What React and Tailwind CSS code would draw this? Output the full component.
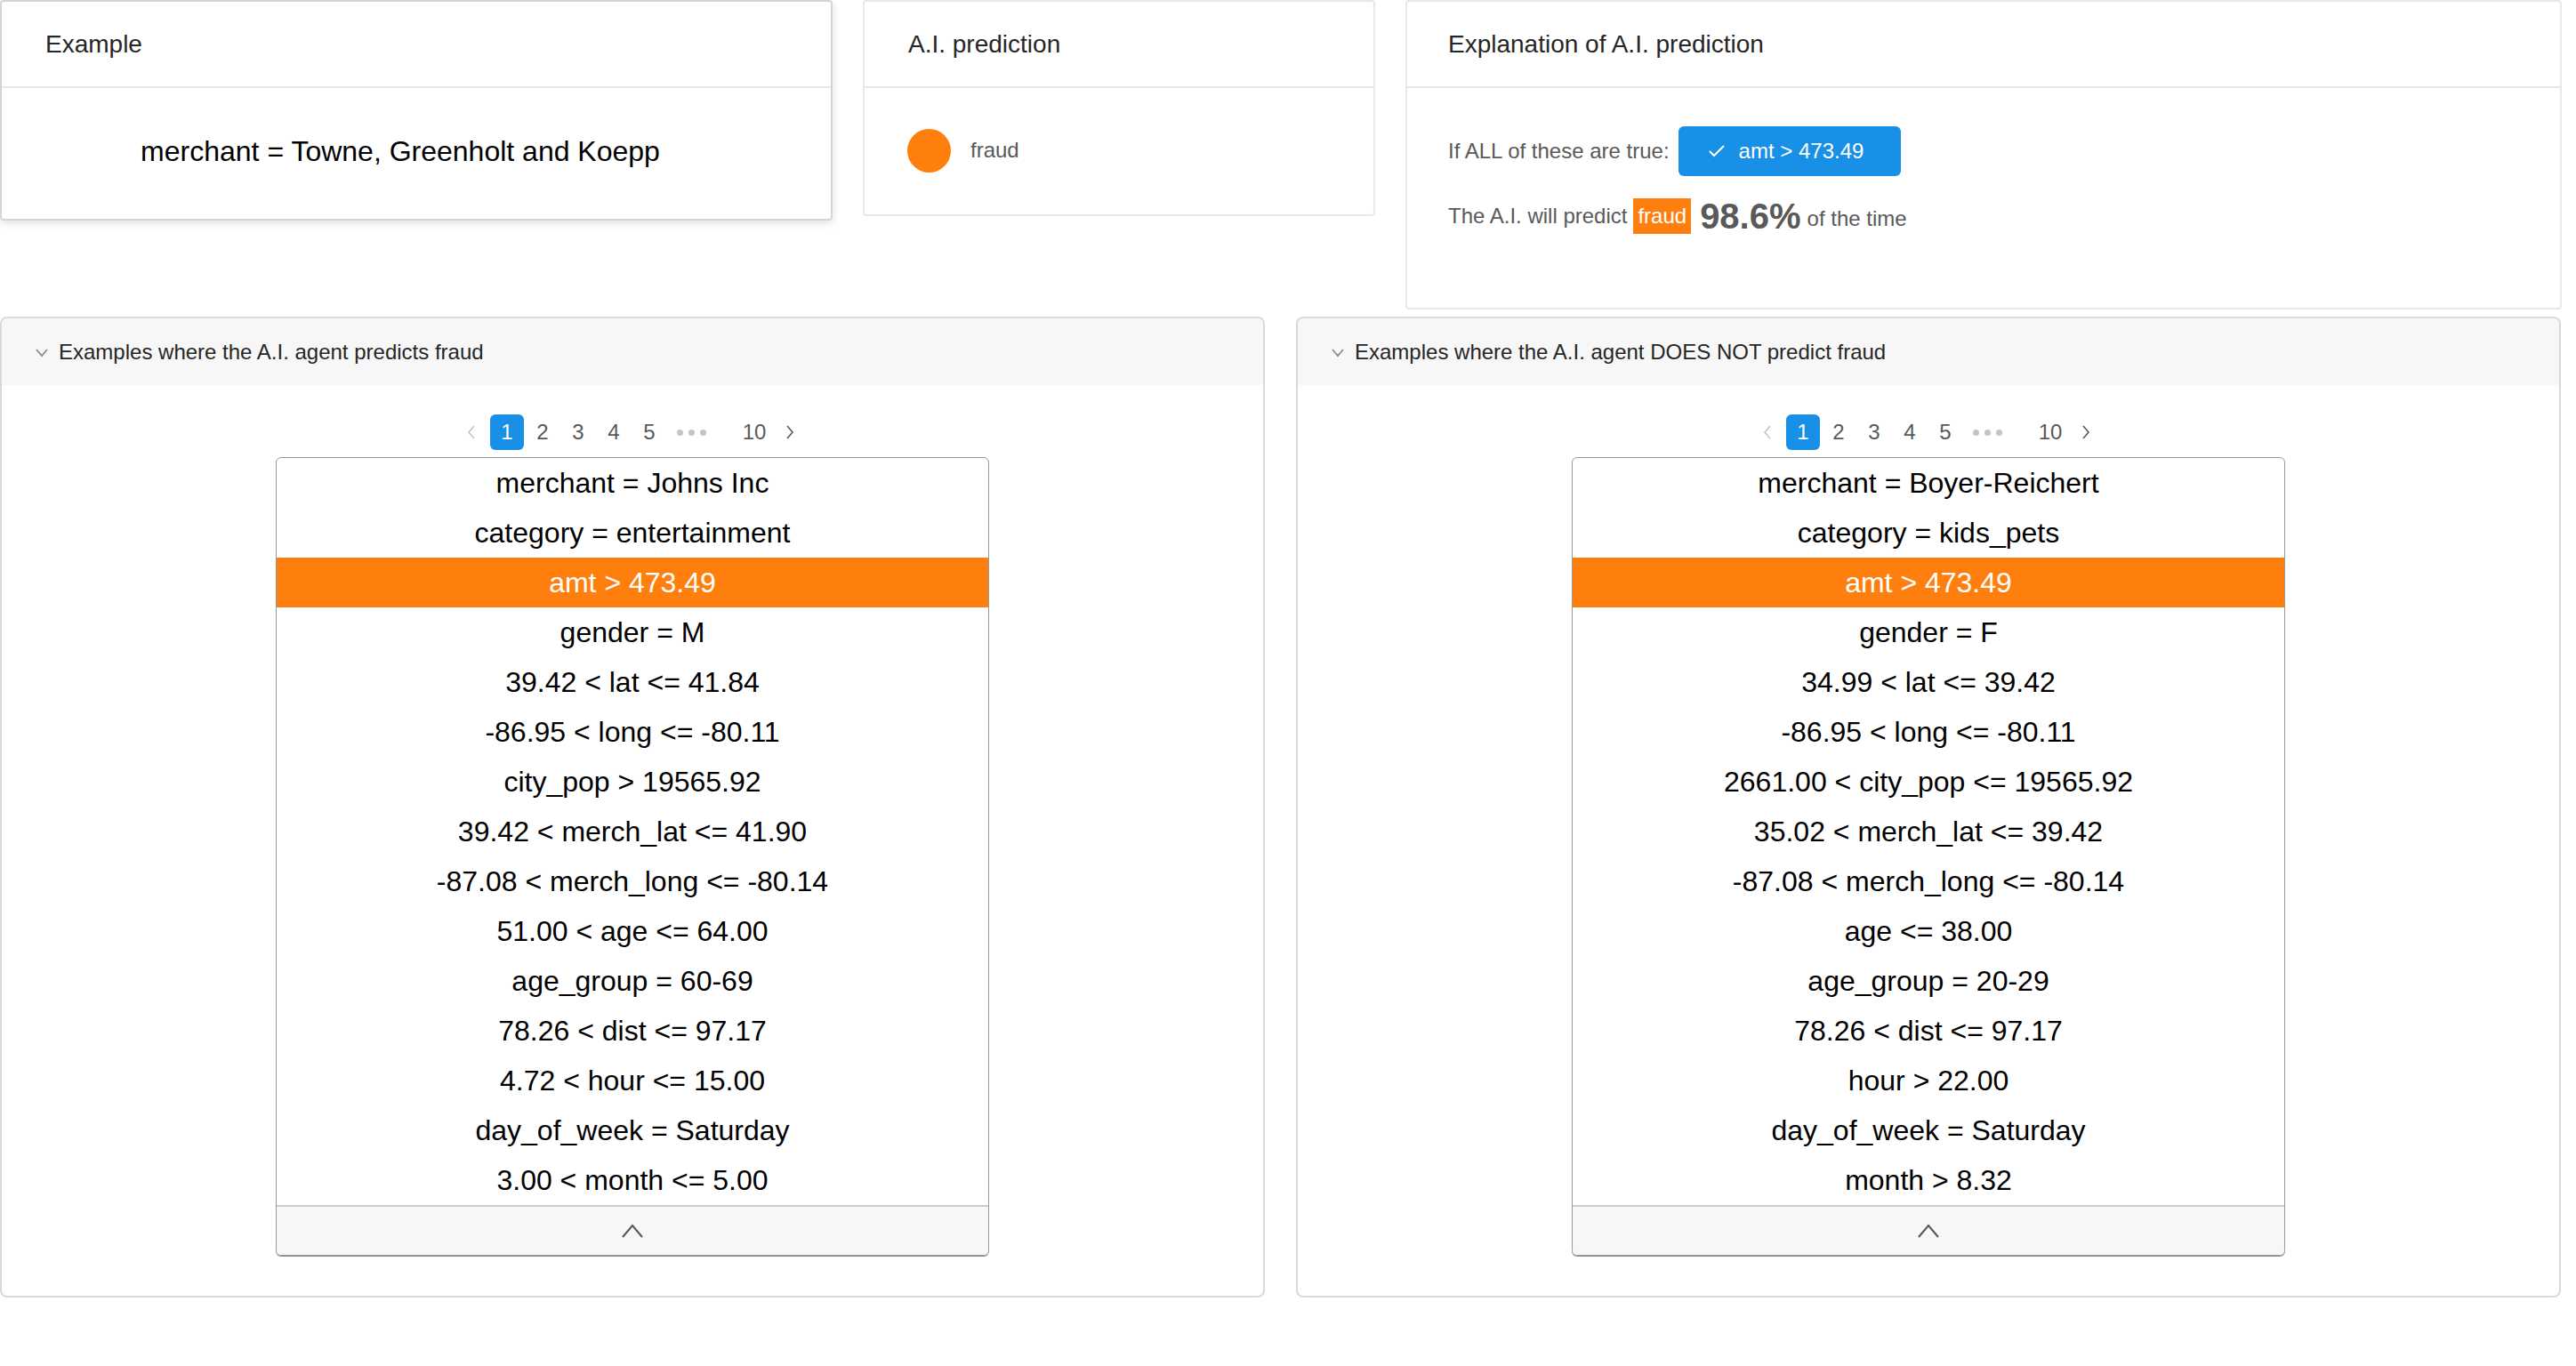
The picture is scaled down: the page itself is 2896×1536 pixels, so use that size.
import React from "react";

const leftRows = [
  "merchant = Johns Inc",
  "category = entertainment",
  "amt > 473.49",
  "gender = M",
  "39.42 < lat <= 41.84",
  "-86.95 < long <= -80.11",
  "city_pop > 19565.92",
  "39.42 < merch_lat <= 41.90",
  "-87.08 < merch_long <= -80.14",
  "51.00 < age <= 64.00",
  "age_group = 60-69",
  "78.26 < dist <= 97.17",
  "4.72 < hour <= 15.00",
  "day_of_week = Saturday",
  "3.00 < month <= 5.00",
];

const rightRows = [
  "merchant = Boyer-Reichert",
  "category = kids_pets",
  "amt > 473.49",
  "gender = F",
  "34.99 < lat <= 39.42",
  "-86.95 < long <= -80.11",
  "2661.00 < city_pop <= 19565.92",
  "35.02 < merch_lat <= 39.42",
  "-87.08 < merch_long <= -80.14",
  "age <= 38.00",
  "age_group = 20-29",
  "78.26 < dist <= 97.17",
  "hour > 22.00",
  "day_of_week = Saturday",
  "month > 8.32",
];

function Pagination() {
  return (
    <div className="flex items-center justify-center h-[40px] pr-[4px] text-[24px] text-[#595959]">
      {/* prev */}
      <div className="w-[38px] h-[40px] flex items-center justify-center mr-[2px]">
        <svg width="10" height="18" viewBox="0 0 10 18">
          <polyline points="8,2 2,9 8,16" fill="none" stroke="#c4c4c4" strokeWidth="1.6" />
        </svg>
      </div>
      <div className="w-[38px] h-[40px] rounded-[6px] bg-[#1890e8] text-white flex items-center justify-center mr-[2px]">
        1
      </div>
      {["2", "3", "4", "5"].map((n) => (
        <div key={n} className="w-[38px] h-[40px] flex items-center justify-center mr-[2px]">
          {n}
        </div>
      ))}
      <div className="w-[52px] h-[40px] flex items-center justify-center gap-[6px] mr-[2px]">
        <span className="w-[7px] h-[7px] rounded-full bg-[#c4c4c4]" />
        <span className="w-[7px] h-[7px] rounded-full bg-[#c4c4c4]" />
        <span className="w-[7px] h-[7px] rounded-full bg-[#c4c4c4]" />
      </div>
      <div className="w-[38px] h-[40px] flex items-center justify-center ml-[24px] mr-[2px]">
        10
      </div>
      <div className="w-[38px] h-[40px] flex items-center justify-center">
        <svg width="10" height="18" viewBox="0 0 10 18">
          <polyline points="2,2 8,9 2,16" fill="none" stroke="#595959" strokeWidth="1.6" />
        </svg>
      </div>
    </div>
  );
}

function RuleList({ rows }) {
  return (
    <div className="w-[802px] mx-auto mt-[8px] border border-[#999] rounded-[6px] shadow-[0_1px_0_#888] overflow-hidden">
      {rows.map((r, i) => (
        <div
          key={i}
          className={
            i === 2
              ? "h-[56px] flex items-center justify-center text-[32px] bg-[#ff7f0e] text-white"
              : "h-[56px] flex items-center justify-center text-[32px] text-black"
          }
        >
          {r}
        </div>
      ))}
      <div className="h-[56px] border-t-2 border-[#cccccc] bg-[#f7f7f7] flex items-center justify-center">
        <svg width="24" height="16" viewBox="0 0 24 16">
          <polyline points="1,15 12,2 23,15" fill="none" stroke="#555" strokeWidth="2" />
        </svg>
      </div>
    </div>
  );
}

function Panel({ title, rows }) {
  return (
    <div className="w-[1422px] h-[1103px] border-2 border-[#d9d9d9] rounded-[8px] overflow-hidden">
      <div className="h-[75px] bg-[#f7f7f7] flex items-center pl-[38px] text-[24px] text-[#262626]">
        <svg width="14" height="10" viewBox="0 0 14 10" className="mr-[12px] mt-[2px]">
          <polyline points="1,1 7,8 13,1" fill="none" stroke="#8c8c8c" strokeWidth="1.8" />
        </svg>
        {title}
      </div>
      <div className="pt-[33px]">
        <Pagination />
        <RuleList rows={rows} />
      </div>
    </div>
  );
}

export default function App() {
  return (
    <div className="w-[2896px] h-[1536px] bg-white font-['Liberation_Sans',Arial,sans-serif] overflow-hidden">
      {/* top row */}
      <div className="flex items-start gap-[34px] w-[2880px]">
        {/* example */}
        <div className="w-[936px] h-[248px] border-2 border-[#d4d4d4] rounded-[4px] shadow-[0_3px_10px_rgba(0,0,0,0.12)] flex flex-col">
          <div className="h-[97px] border-b-2 border-[#e8e8e8] flex items-center pl-[49px] text-[28px] text-[#262626]">
            Example
          </div>
          <div className="flex-1 flex items-center justify-center pr-[36px] pb-[6px] text-[32px] text-black">
            merchant = Towne, Greenholt and Koepp
          </div>
        </div>

        {/* prediction */}
        <div className="w-[576px] h-[243px] border-2 border-[#e8e8e8] rounded-[4px] flex flex-col">
          <div className="h-[97px] border-b-2 border-[#e8e8e8] flex items-center pl-[49px] text-[28px] text-[#262626]">
            A.I. prediction
          </div>
          <div className="flex-1 flex items-center pl-[48px] pb-[2px]">
            <div className="w-[49px] h-[49px] rounded-full bg-[#ff7f0e]" />
            <span className="ml-[22px] text-[24px] text-[#595959]">fraud</span>
          </div>
        </div>

        {/* explanation */}
        <div className="w-[1300px] h-[348px] border-2 border-[#e8e8e8] rounded-[4px] flex flex-col">
          <div className="h-[97px] border-b-2 border-[#e8e8e8] flex items-center pl-[46px] text-[28px] text-[#262626]">
            Explanation of A.I. prediction
          </div>
          <div className="pt-[43px] pl-[46px] text-[24px] text-[#595959]">
            <div className="flex items-center">
              <span>If ALL of these are true:</span>
              <div className="ml-[10px] w-[250px] h-[56px] rounded-[6px] bg-[#1890e8] text-white flex items-center pl-[34px]">
                <svg width="18" height="14" viewBox="0 0 18 14" className="mr-[16px]">
                  <polyline points="1,7 6,12 17,1" fill="none" stroke="#fff" strokeWidth="2" />
                </svg>
                amt &gt; 473.49
              </div>
            </div>
            <div className="flex items-center mt-[25px] h-[40px]">
              <span>The A.I. will predict</span>
              <span className="ml-[7px] h-[40px] px-[5px] bg-[#ff7f0e] text-white flex items-center">fraud</span>
              <span className="ml-[10px] text-[40px] font-bold text-[#595959]">98.6%</span>
              <span className="ml-[7px] mt-[6px]">of the time</span>
            </div>
          </div>
        </div>
      </div>

      {/* bottom row */}
      <div className="flex gap-[35px] mt-[8px]">
        <Panel title="Examples where the A.I. agent predicts fraud" rows={leftRows} />
        <Panel title="Examples where the A.I. agent DOES NOT predict fraud" rows={rightRows} />
      </div>
    </div>
  );
}
